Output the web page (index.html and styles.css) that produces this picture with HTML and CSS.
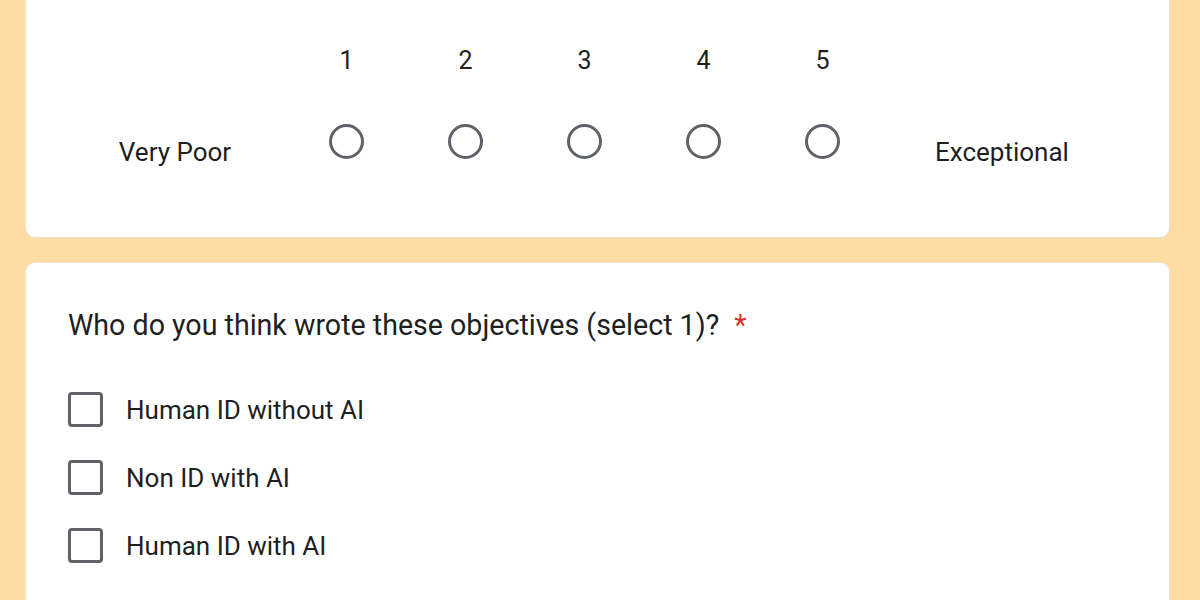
FILE: index.html
```html
<!DOCTYPE html>
<html>
<head>
<meta charset="utf-8">
<link rel="stylesheet" href="styles.css">
</head>
<body>
<div class="page">
  <section class="card card-scale">
    <div class="scale">
      <div class="cell"></div>
      <div class="cell num">1</div>
      <div class="cell num">2</div>
      <div class="cell num">3</div>
      <div class="cell num">4</div>
      <div class="cell num">5</div>
      <div class="cell"></div>
      <div class="cell end-label">Very Poor</div>
      <div class="cell"><span class="radio"></span></div>
      <div class="cell"><span class="radio"></span></div>
      <div class="cell"><span class="radio"></span></div>
      <div class="cell"><span class="radio"></span></div>
      <div class="cell"><span class="radio"></span></div>
      <div class="cell end-label">Exceptional</div>
    </div>
  </section>
  <section class="card card-question">
    <div class="title">Who do you think wrote these objectives (select 1)?<span class="req">*</span></div>
    <div class="options">
      <div class="option"><span class="checkbox"></span><span class="opt-label">Human ID without AI</span></div>
      <div class="option"><span class="checkbox"></span><span class="opt-label">Non ID with AI</span></div>
      <div class="option"><span class="checkbox"></span><span class="opt-label">Human ID with AI</span></div>
    </div>
  </section>
</div>
</body>
</html>
```

FILE: styles.css
```css
html, body {
  margin: 0;
  padding: 0;
  background: #fedca4;
  height: 100%;
  overflow: hidden;
}
body {
  font-family: Roboto, "Liberation Sans", Arial, sans-serif;
  color: #1f1f1f;
}
.page {
  display: flex;
  flex-direction: column;
  gap: 24px;
  padding: 0 30px 0 25px;
  margin-top: -20px;
}
.card {
  background: #fff;
  border-radius: 10px;
  border: 1px solid #efe2cc;
  box-sizing: border-box;
}
.card-scale {
  height: 258px;
  padding: 64px 42px 0 42px;
}
.scale {
  display: grid;
  grid-template-columns: 219px repeat(5, 119px) 1fr;
  grid-template-rows: 30px 49px;
  row-gap: 49px;
}
.cell {
  display: flex;
  justify-content: center;
  align-items: flex-start;
  font-size: 25px;
  line-height: 30px;
}
.num {
  padding-top: 1px;
}
.end-label {
  font-size: 26px;
  padding-top: 13px;
  padding-right: 5px;
}
.radio {
  display: block;
  width: 35px;
  height: 35px;
  box-sizing: border-box;
  border: 3px solid #5f6368;
  border-radius: 50%;
}
.card-question {
  padding: 44px 42px 60px 42px;
  min-height: 400px;
}
.title {
  font-size: 28.6px;
  line-height: 36px;
}
.req {
  color: #d93025;
  margin-left: 15px;
}
.options {
  margin-top: 49px;
  display: flex;
  flex-direction: column;
  gap: 33px;
}
.option {
  display: flex;
  align-items: center;
  gap: 23px;
}
.checkbox {
  display: block;
  width: 35px;
  height: 35px;
  box-sizing: border-box;
  border: 3px solid #5f6368;
  border-radius: 4px;
}
.opt-label {
  font-size: 26px;
  line-height: 30px;
}
```
